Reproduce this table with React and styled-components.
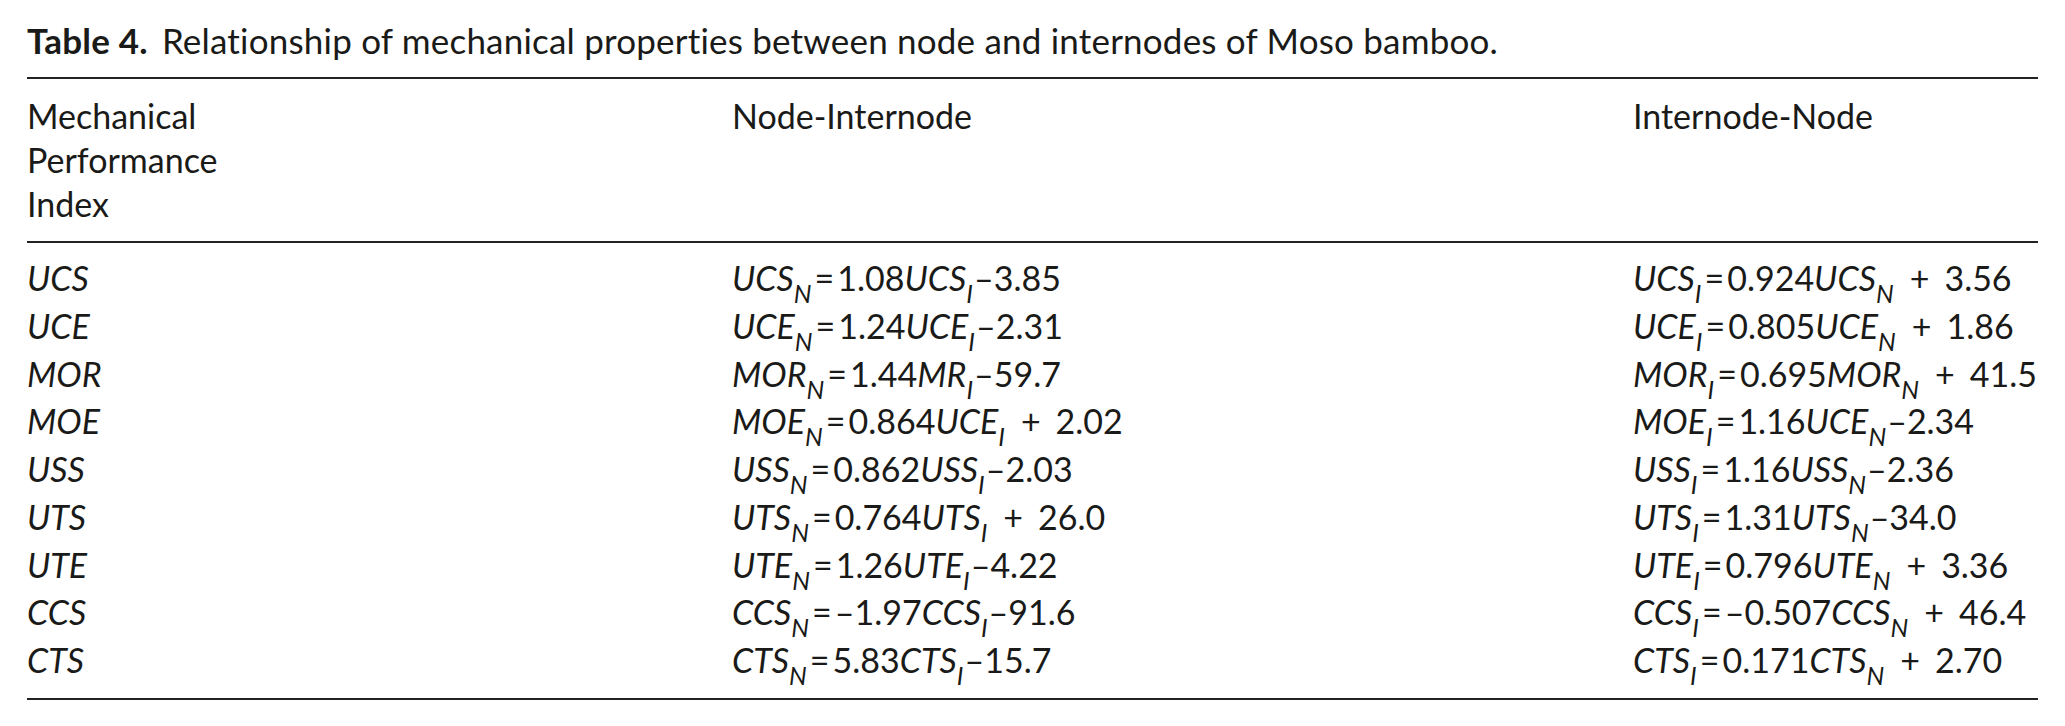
import React from "react";
import styled, { createGlobalStyle } from "styled-components";

const Global = createGlobalStyle`
  html, body {
    margin: 0;
    background: #fff;
  }
  body {
    font-family: Lato, "Open Sans", sans-serif;
    font-variant-ligatures: none;
    color: #1a1a18;
  }
`;

const Page = styled.div`
  width: 2011px;
  padding: 20px 0 0 27px;
`;

const Caption = styled.div`
  font-size: 35px;
  line-height: 40px;
  letter-spacing: 0.2px;
  margin-bottom: 17px;
  white-space: nowrap;
  b {
    font-weight: 700;
    letter-spacing: 0.2px;
    margin-right: 14px;
  }
`;

const Table = styled.table`
  width: 100%;
  border-collapse: collapse;
  table-layout: fixed;
  font-size: 34px;
  border-top: 2px solid #222;
  border-bottom: 2px solid #222;
`;

const Head = styled.thead`
  th {
    text-align: left;
    font-weight: 400;
    vertical-align: top;
    line-height: 44px;
    padding: 15px 0 15px 0;
    border-bottom: 2px solid #222;
  }
`;

const Body = styled.tbody`
  td {
    line-height: 47.75px;
    padding: 0;
    white-space: nowrap;
  }
  tr:first-child td {
    padding-top: 11px;
  }
  tr:last-child td {
    padding-bottom: 14px;
  }
`;

const Index = styled.td`
  font-style: italic;
`;

const Var = styled.i`
  font-style: italic;
`;

const Sub = styled.sub`
  font-size: 25px;
  line-height: 0;
  vertical-align: -12px;
  font-style: italic;
  margin-right: 1px;
`;

const Eq = styled.span`
  margin: 0 3px 0 2px;
`;

const Plus = styled.span`
  margin: 0 15px;
`;

const rows = [
  ["UCS", "UCS_N=1.08UCS_I–3.85", "UCS_I=0.924UCS_N+3.56"],
  ["UCE", "UCE_N=1.24UCE_I–2.31", "UCE_I=0.805UCE_N+1.86"],
  ["MOR", "MOR_N=1.44MR_I–59.7", "MOR_I=0.695MOR_N+41.5"],
  ["MOE", "MOE_N=0.864UCE_I+2.02", "MOE_I=1.16UCE_N–2.34"],
  ["USS", "USS_N=0.862USS_I–2.03", "USS_I=1.16USS_N–2.36"],
  ["UTS", "UTS_N=0.764UTS_I+26.0", "UTS_I=1.31UTS_N–34.0"],
  ["UTE", "UTE_N=1.26UTE_I–4.22", "UTE_I=0.796UTE_N+3.36"],
  ["CCS", "CCS_N=–1.97CCS_I–91.6", "CCS_I=–0.507CCS_N+46.4"],
  ["CTS", "CTS_N=5.83CTS_I–15.7", "CTS_I=0.171CTS_N+2.70"],
];

// split "UCS_N=1.08UCS_I–3.85" into italic vars with subscripts and plain text
function Formula({ text }) {
  const parts = text.split(/([A-Z]+_[NI])/).filter(Boolean);
  return (
    <>
      {parts.map((p, i) => {
        if (/^[A-Z]+_[NI]$/.test(p)) {
          const [name, sub] = p.split("_");
          return (
            <React.Fragment key={i}>
              <Var>{name}</Var>
              <Sub>{sub}</Sub>
            </React.Fragment>
          );
        }
        return p.split(/([+=])/).filter(Boolean).map((q, j) => {
          const k = i + "-" + j;
          if (q === "+") return <Plus key={k}>+</Plus>;
          if (q === "=") return <Eq key={k}>=</Eq>;
          return <span key={k}>{q}</span>;
        });
      })}
    </>
  );
}

export default function App() {
  return (
    <>
      <Global />
      <Page>
        <Caption>
          <b>Table 4.</b>Relationship of mechanical properties between node and internodes of Moso bamboo.
        </Caption>
        <Table>
          <colgroup>
            <col style={{ width: "705px" }} />
            <col style={{ width: "901px" }} />
            <col />
          </colgroup>
          <Head>
            <tr>
              <th>Mechanical<br />Performance<br />Index</th>
              <th>Node-Internode</th>
              <th>Internode-Node</th>
            </tr>
          </Head>
          <Body>
            {rows.map((r) => (
              <tr key={r[0]}>
                <Index>{r[0]}</Index>
                <td><Formula text={r[1]} /></td>
                <td><Formula text={r[2]} /></td>
              </tr>
            ))}
          </Body>
        </Table>
      </Page>
    </>
  );
}
